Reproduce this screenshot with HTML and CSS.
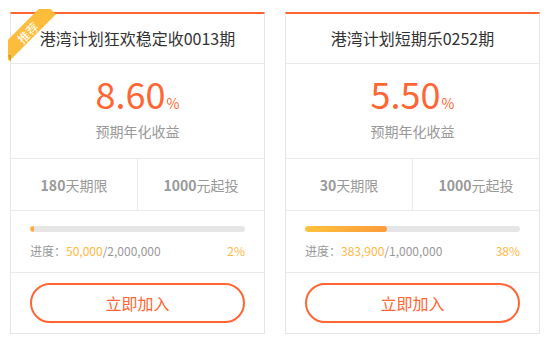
FILE: index.html
```html
<!DOCTYPE html>
<html lang="zh-CN">
<head>
    <meta charset="UTF-8">
    <meta name="viewport" content="width=device-width, initial-scale=1.0">
    <title>港湾计划</title>
    <link rel="stylesheet" href="styles.css">
</head>
<body>
    <div class="plans">
        <div class="card">
            <div class="tag"><span class="tag-band">推荐</span></div>
            <div class="card-title">港湾计划狂欢稳定收0013期</div>
            <div class="card-rate">
                <div class="rate"><span class="rate-num">8.60</span><span class="rate-unit">%</span></div>
                <div class="rate-label">预期年化收益</div>
            </div>
            <div class="card-terms">
                <div class="term"><b>180</b>天期限</div>
                <div class="term"><b>1000</b>元起投</div>
            </div>
            <div class="card-progress">
                <div class="bar"><div class="bar-fill" style="width: 2%"></div></div>
                <div class="progress-info">
                    <span>进度：<em>50,000</em>/2,000,000</span>
                    <em>2%</em>
                </div>
            </div>
            <div class="card-action">
                <a class="join-btn" href="#">立即加入</a>
            </div>
        </div>

        <div class="card">
            <div class="card-title">港湾计划短期乐0252期</div>
            <div class="card-rate">
                <div class="rate"><span class="rate-num">5.50</span><span class="rate-unit">%</span></div>
                <div class="rate-label">预期年化收益</div>
            </div>
            <div class="card-terms">
                <div class="term"><b>30</b>天期限</div>
                <div class="term"><b>1000</b>元起投</div>
            </div>
            <div class="card-progress">
                <div class="bar"><div class="bar-fill" style="width: 38%"></div></div>
                <div class="progress-info">
                    <span>进度：<em>383,900</em>/1,000,000</span>
                    <em>38%</em>
                </div>
            </div>
            <div class="card-action">
                <a class="join-btn" href="#">立即加入</a>
            </div>
        </div>
    </div>
</body>
</html>
```

FILE: styles.css
```css
body {
    margin: 0;
    font-family: "Noto Sans CJK SC", "Noto Sans", sans-serif;
    color: #333;
    background: #fff;
}
.plans {
    display: flex;
    gap: 20px;
    padding: 12px 0 0 10px;
}
.card {
    position: relative;
    width: 253px;
    border: 1px solid #e6e6e6;
    border-top: 2px solid #ff6633;
    background: #fff;
}

/* corner ribbon */
.tag {
    position: absolute;
    left: -3px;
    top: -5px;
    width: 50px;
    height: 53px;
    overflow: hidden;
    z-index: 2;
}
.tag-band {
    position: absolute;
    left: -14px;
    top: 15px;
    width: 66px;
    height: 16px;
    line-height: 17px;
    text-align: center;
    font-size: 12px;
    color: #fff;
    background: #fcbd3c;
    transform: rotate(-45deg);
}
.tag::after {
    content: "";
    position: absolute;
    left: 0;
    top: 46px;
    width: 0;
    height: 0;
    border-top: 7px solid #d99a26;
    border-left: 3px solid transparent;
}

.card-title {
    height: 49px;
    line-height: 49px;
    text-align: center;
    font-size: 16px;
    border-bottom: 1px solid #ebebeb;
}
.card-rate {
    padding: 3px 0 17px;
    text-align: center;
    border-bottom: 1px solid #ebebeb;
}
.rate {
    height: 52px;
    line-height: 52px;
    color: #ff6633;
}
.rate-num {
    font-size: 36px;
}
.rate-unit {
    font-size: 14px;
    margin-left: 1px;
}
.rate-label {
    margin-top: 2px;
    line-height: 20px;
    font-size: 14px;
    color: #999;
}
.card-terms {
    display: flex;
    border-bottom: 1px solid #ebebeb;
}
.term {
    flex: 1;
    height: 51px;
    line-height: 53px;
    text-align: center;
    font-size: 14px;
    color: #999;
}
.term + .term {
    border-left: 1px solid #ebebeb;
}
.term b {
    font-weight: 700;
}
.card-progress {
    padding: 15px 19px 11px;
    border-bottom: 1px solid #ebebeb;
}
.bar {
    height: 6px;
    border-radius: 3px;
    background: #e6e6e6;
    overflow: hidden;
}
.bar-fill {
    height: 100%;
    border-radius: 3px;
    background: linear-gradient(to right, #ffc23c, #ff9c3c);
}
.progress-info {
    display: flex;
    justify-content: space-between;
    margin-top: 9px;
    line-height: 20px;
    font-size: 12px;
    color: #999;
}
.progress-info em {
    font-style: normal;
    color: #ffb844;
}
.card-action {
    padding: 10px 19px;
}
.join-btn {
    display: block;
    height: 36px;
    line-height: 36px;
    border: 2px solid #ff6633;
    border-radius: 20px;
    text-align: center;
    font-size: 16px;
    color: #ff6633;
    text-decoration: none;
}
```
